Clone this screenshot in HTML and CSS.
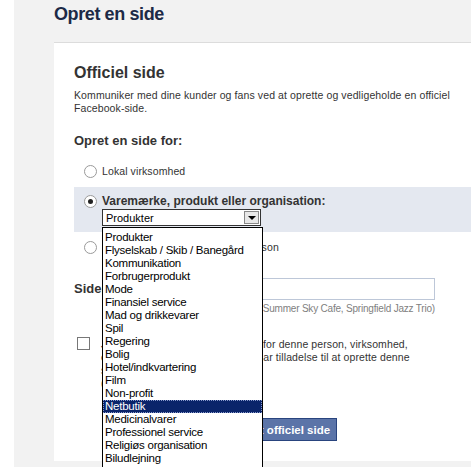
FILE: index.html
```html
<!DOCTYPE html>
<html lang="da">
<head>
    <meta charset="UTF-8">
    <meta name="viewport" content="width=device-width, initial-scale=1.0">
    <title>Opret en side</title>
    <link rel="stylesheet" href="styles.css">
</head>
<body>
    <div class="page">
        <h1 class="page-title">Opret en side</h1>

        <div class="card">
            <h2>Officiel side</h2>
            <p class="intro">Kommuniker med dine kunder og fans ved at oprette og vedligeholde en officiel Facebook-side.</p>

            <h3>Opret en side for:</h3>

            <!-- Category choice -->
            <div class="choice">
                <span class="radio"></span>
                <span>Lokal virksomhed</span>
            </div>
            <div class="choice choice-selected">
                <span class="radio checked"></span>
                <div class="choice-body">
                    <span class="choice-bold">Varemærke, produkt eller organisation:</span>
                    <div class="select-wrap">
                        <div class="select">
                            <span>Produkter</span>
                            <span class="select-arrow"></span>
                        </div>
                        <ul class="select-list">
                            <li>Produkter</li>
                            <li>Flyselskab / Skib / Banegård</li>
                            <li>Kommunikation</li>
                            <li>Forbrugerprodukt</li>
                            <li>Mode</li>
                            <li>Finansiel service</li>
                            <li>Mad og drikkevarer</li>
                            <li>Spil</li>
                            <li>Regering</li>
                            <li>Bolig</li>
                            <li>Hotel/indkvartering</li>
                            <li>Film</li>
                            <li>Non-profit</li>
                            <li class="active">Netbutik</li>
                            <li>Medicinalvarer</li>
                            <li>Professionel service</li>
                            <li>Religiøs organisation</li>
                            <li>Biludlejning</li>
                            <li>Detailhandel</li>
                        </ul>
                    </div>
                </div>
            </div>
            <div class="choice">
                <span class="radio"></span>
                <span class="choice-wide">Kunstner, band eller offentlig person</span>
            </div>

            <!-- Page name -->
            <div class="name-row">
                <label class="name-label">Sidenavn:</label>
                <div class="name-field">
                    <input type="text" class="name-input">
                    <div class="hint">(Eksempel: Summer Sky Cafe, Springfield Jazz Trio)</div>
                </div>
            </div>

            <div class="agree">
                <span class="checkbox"></span>
                <p>Jeg er den officielle repræsentant for denne person, virksomhed, organisation eller det produkt og har tilladelse til at oprette denne side.<br>(Elektronisk underskrift)</p>
            </div>

            <div class="actions">
                <button class="btn">Opret officiel side</button>
            </div>
        </div>
    </div>
</body>
</html>
```
FILE: styles.css
```css
html, body {
    margin: 0;
    overflow: hidden;
}
body {
    background: #fff;
    font-family: "Liberation Sans", Arial, sans-serif;
    font-size: 10.5px;
    letter-spacing: 0.1px;
    color: #333;
}
.page {
    margin-left: 14px;
    padding-left: 40px;
    background: #f2f2f2;
    height: 467px;
}
.page-title {
    margin: 0;
    height: 42px;
    padding-top: 4px;
    box-sizing: border-box;
    font-family: "Liberation Sans Narrow", "Liberation Sans", Arial, sans-serif;
    font-size: 18px;
    letter-spacing: -0.4px;
    color: #1c2a47;
}
.card {
    width: 500px;
    height: 419px;
    box-sizing: border-box;
    background: #fff;
    border-top: 1px solid #dcdcdc;
    padding: 19px 20px 0;
}
h2 {
    margin: 0;
    font-size: 16px;
    line-height: 22px;
    letter-spacing: 0;
}
.intro {
    margin: 5px 0 0;
    width: 385px;
    line-height: 13px;
}
h3 {
    margin: 18px 0 0;
    font-size: 13px;
    line-height: 16px;
    letter-spacing: 0;
}
.choice {
    display: flex;
    align-items: flex-start;
    gap: 5px;
    padding: 0 10px;
    line-height: 14px;
}
.choice:nth-of-type(1) {
    margin-top: 15px;
}
.choice-selected {
    margin-top: 9px;
    padding-top: 7px;
    padding-bottom: 6px;
    background: #e4e8f0;
}
.choice-selected + .choice {
    margin-top: 8px;
}
.choice-wide {
    letter-spacing: 0.25px;
}
.radio {
    flex: none;
    width: 11px;
    height: 11px;
    margin-top: 1px;
    border: 1px solid #9a9a9a;
    border-radius: 50%;
    background: #fff;
    box-sizing: content-box;
    position: relative;
}
.radio.checked::after {
    content: "";
    position: absolute;
    left: 3px;
    top: 3px;
    width: 5px;
    height: 5px;
    border-radius: 50%;
    background: #222;
}
.choice-bold {
    font-weight: bold;
    font-size: 12px;
    letter-spacing: 0;
}
.select-wrap {
    position: relative;
    margin-top: 1px;
}
.select {
    width: 159px;
    height: 17px;
    box-sizing: border-box;
    border: 1px solid #333;
    background: #fff;
    display: flex;
    align-items: center;
    justify-content: space-between;
    padding: 0 1px 0 3px;
    font-size: 11px;
    letter-spacing: 0;
    color: #000;
}
.select-arrow {
    width: 15px;
    height: 13px;
    box-sizing: border-box;
    border: 1px solid #888;
    background: #e8e8e8;
    position: relative;
}
.select-arrow::after {
    content: "";
    position: absolute;
    left: 3px;
    top: 4px;
    border-left: 4px solid transparent;
    border-right: 4px solid transparent;
    border-top: 4px solid #000;
}
.select-list {
    position: absolute;
    left: 0;
    top: 18px;
    z-index: 2;
    width: 161px;
    box-sizing: border-box;
    margin: 0;
    padding: 3px 0 0;
    list-style: none;
    background: #fff;
    border: 1px solid #000;
    font-size: 11.5px;
    letter-spacing: -0.25px;
    line-height: 13px;
    color: #000;
}
.select-list li {
    padding-left: 2px;
    height: 13px;
}
.select-list li.active {
    background: #0a246a;
    color: #fff;
    outline: 1px dotted #8899cc;
    outline-offset: -1px;
}
.name-row {
    display: flex;
    gap: 4px;
    margin-top: 24px;
}
.name-label {
    font-weight: bold;
    font-size: 13px;
    letter-spacing: 0;
    line-height: 22px;
    width: 40px;
}
.name-input {
    width: 317px;
    height: 22px;
    box-sizing: border-box;
    border: 1px solid #bdc7d8;
    margin: 0;
}
.hint {
    margin-top: 3px;
    color: #808080;
    font-size: 10px;
    letter-spacing: -0.2px;
    text-align: right;
}
.agree {
    display: flex;
    gap: 11px;
    margin-top: 24px;
    padding-left: 3px;
}
.checkbox {
    flex: none;
    width: 11px;
    height: 11px;
    border: 1px solid #777;
    background: #fff;
    margin-top: -1px;
}
.agree p {
    margin: 0;
    width: 325px;
    line-height: 13px;
}
.actions {
    margin-top: 28px;
    padding-left: 152px;
}
.btn {
    background: #5b74a8;
    border: 1px solid #29447e;
    color: #fff;
    font-family: "Liberation Sans", Arial, sans-serif;
    font-weight: bold;
    font-size: 11.5px;
    height: 23px;
    padding: 0 6px;
}
```
